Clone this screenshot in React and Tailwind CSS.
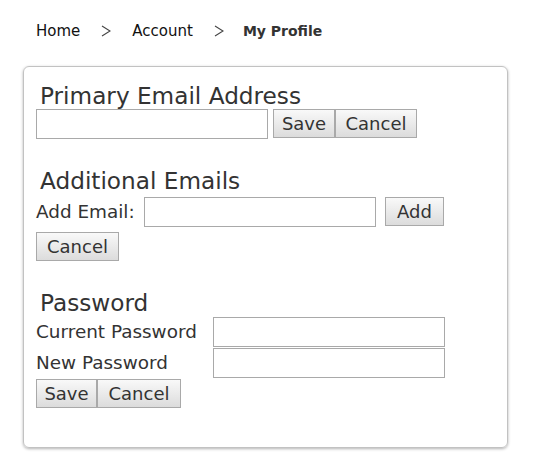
import React from "react";

function Chevron() {
    return (
        <svg width="10" height="12" viewBox="0 0 10 12" className="shrink-0">
            <polyline points="1,1 9,6 1,11" fill="none" stroke="#444" strokeWidth="1.1" />
        </svg>
    );
}

function Btn({ w, children }) {
    return (
        <button
            className={`${w} h-[29px] shrink-0 border border-[#a9a9a9] bg-linear-to-b from-[#f9f9f9] to-[#dcdcdc] text-[18px] leading-none text-[#333] flex items-center justify-center`}
        >
            {children}
        </button>
    );
}

function Field() {
    return <input type="text" className="w-[232px] h-[30px] shrink-0 border border-[#a9a9a9] bg-white outline-none px-1" />;
}

export default function App() {
    return (
        <div className="min-h-[472px] bg-white font-['DejaVu_Sans',sans-serif] text-[#333]">
            {/* breadcrumb */}
            <nav className="pt-[21px] pl-[36px] flex items-center gap-[21px] h-[41px] text-[15px] leading-[20px]">
                <span className="text-[#111]">Home</span>
                <Chevron />
                <span className="text-[#111]">Account</span>
                <Chevron />
                <span className="-ml-[2px] text-[14px] font-bold text-[#333]">My Profile</span>
            </nav>

            {/* card */}
            <div className="mt-[25px] ml-[23px] w-[485px] border border-[#c2c2c2] rounded-[6px] shadow-[0_1px_3px_rgba(0,0,0,0.3)] pt-[17px] pb-[39px] px-[12px] text-[18.4px]">
                <h2 className="pl-1 text-[23.2px] leading-[23px]">Primary Email Address</h2>
                <div className="mt-[2px] flex items-start">
                    <Field />
                    <div className="ml-[5px] flex">
                        <Btn w="w-[62px]">Save</Btn>
                        <Btn w="w-[82px]">Cancel</Btn>
                    </div>
                </div>

                <h2 className="mt-[30px] pl-1 text-[23.2px] leading-[23px]">Additional Emails</h2>
                <div className="mt-[5px] flex items-center">
                    <label className="w-[108px] shrink-0 leading-[30px]">Add Email:</label>
                    <Field />
                    <div className="ml-[9px] self-start">
                        <Btn w="w-[59px]">Add</Btn>
                    </div>
                </div>
                <div className="mt-[5px] flex">
                    <Btn w="w-[83px]">Cancel</Btn>
                </div>

                <h2 className="mt-[30px] pl-1 text-[23.2px] leading-[23px]">Password</h2>
                <div className="mt-[3px] flex flex-col gap-[1px]">
                    <div className="flex items-center">
                        <label className="w-[177px] shrink-0 leading-[30px]">Current Password</label>
                        <Field />
                    </div>
                    <div className="flex items-center">
                        <label className="w-[177px] shrink-0 leading-[30px]">New Password</label>
                        <Field />
                    </div>
                </div>
                <div className="mt-[1px] flex">
                    <Btn w="w-[61px]">Save</Btn>
                    <Btn w="w-[84px]">Cancel</Btn>
                </div>
            </div>
        </div>
    );
}
